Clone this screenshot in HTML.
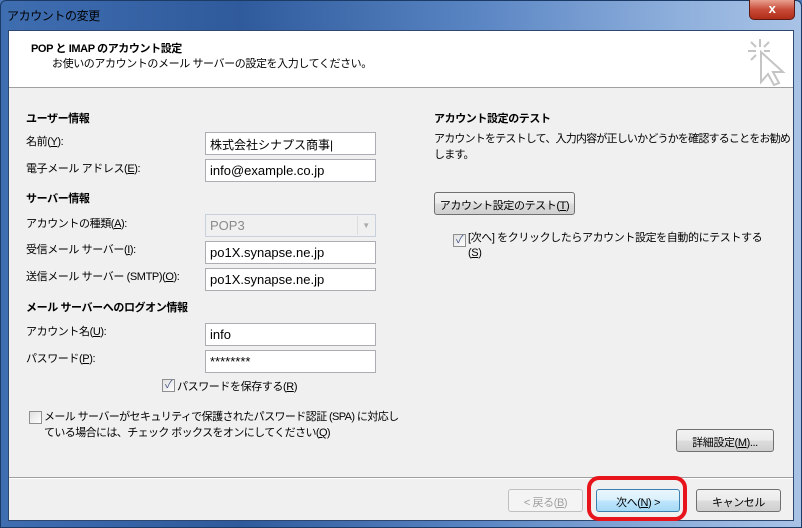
<!DOCTYPE html>
<html><head><meta charset="utf-8"><style>
*{margin:0;padding:0;box-sizing:border-box}
body{width:802px;height:528px;overflow:hidden;background:#4a78b8;font-family:"Liberation Sans","Noto Sans CJK JP",sans-serif;font-size:11px;letter-spacing:-0.4px;color:#000;position:relative}
.a{position:absolute;white-space:nowrap}
.frame{position:absolute;left:0;top:0;width:802px;height:528px;background:linear-gradient(90deg,#3f6eb0 0%,#2f5a9c 30%,#5b86c4 60%,#8fb0dc 85%,#a9c3e6 100%);border:1px solid #1c3a66;border-radius:6px 6px 0 0}
.client{position:absolute;left:8px;top:30px;width:786px;height:491px;background:#f0f0f0;border:1px solid #2d4770}
.hdr{position:absolute;left:0;top:0;width:784px;height:57px;background:#fff;border-bottom:1px solid #a0a0a0}
.in{position:absolute;height:23px;background:#fff;border:1px solid #abadb3;padding:3px 0 0 4px;font-size:13px;letter-spacing:0;white-space:nowrap}
.b{font-weight:bold}
.btn{position:absolute;height:23px;border:1px solid #707070;border-radius:3px;background:linear-gradient(#f2f2f2,#ebebeb 50%,#dddddd 51%,#cfcfcf);text-align:center;padding-top:4px;white-space:nowrap}
.cb{position:absolute;width:13px;height:13px;border:1px solid #8e8f8f;background:linear-gradient(135deg,#e0e0e0,#fff)}
u{text-decoration:underline}
</style></head><body>
<div class="frame"></div>
<div class="a" style="left:7px;top:7px;font-size:12px">アカウントの変更</div>
<div class="a" style="left:749px;top:0;width:46px;height:20px;border:1px solid #5a1a12;border-top:none;border-radius:0 0 5px 5px;background:linear-gradient(#e8a090,#c84c38 50%,#b02c18);color:#fff;text-align:center;font-weight:bold;font-size:13px;line-height:18px">x</div>
<div class="client">
<div class="hdr">
<div class="a b" style="left:22px;top:9px">POP と IMAP のアカウント設定</div>
<div class="a" style="left:43px;top:24px">お使いのアカウントのメール サーバーの設定を入力してください。</div>
<svg class="a" style="left:737px;top:6px" width="40" height="50" viewBox="0 0 40 50"><g stroke="#c4c4c4" stroke-width="2" fill="none"><path d="M14 2v8M2 14h8M5 5l5 5M23 5l-5 5M5 23l5-5M18 14h6"/><path d="M15 15l0 30 7-8 6 11 5-2-6-11 10 0z" fill="#fff"/></g></svg>
</div>
<div class="a b" style="left:17px;top:79px">ユーザー情報</div>
<div class="a" style="left:17px;top:102px">名前(<u>Y</u>):</div>
<div class="in" style="left:196px;top:101px;width:171px;font-size:12px">株式会社シナプス商事|</div>
<div class="a" style="left:17px;top:129px">電子メール アドレス(<u>E</u>):</div>
<div class="in" style="left:196px;top:128px;width:171px">info@example.co.jp</div>
<div class="a b" style="left:17px;top:159px">サーバー情報</div>
<div class="a" style="left:17px;top:184px">アカウントの種類(<u>A</u>):</div>
<div class="in" style="left:196px;top:183px;width:171px;background:#f0f0f0;border-color:#c8d0dc;color:#8a8a8a">POP3</div>
<div class="a" style="left:348px;top:185px;width:17px;height:19px;border-left:1px solid #ddd;color:#aaa;font-size:8px;text-align:center;padding-top:5px">▼</div>
<div class="a" style="left:17px;top:210px">受信メール サーバー(<u>I</u>):</div>
<div class="in" style="left:196px;top:210px;width:171px">po1X.synapse.ne.jp</div>
<div class="a" style="left:17px;top:237px">送信メール サーバー (SMTP)(<u>O</u>):</div>
<div class="in" style="left:196px;top:237px;width:171px">po1X.synapse.ne.jp</div>
<div class="a b" style="left:17px;top:268px">メール サーバーへのログオン情報</div>
<div class="a" style="left:17px;top:292px">アカウント名(<u>U</u>):</div>
<div class="in" style="left:196px;top:292px;width:171px">info</div>
<div class="a" style="left:17px;top:319px">パスワード(<u>P</u>):</div>
<div class="in" style="left:196px;top:319px;width:171px">********</div>
<div class="cb" style="left:153px;top:348px;color:#4a5a8a;font-size:11px;line-height:11px;text-align:center">✓</div>
<div class="a" style="left:168px;top:347px">パスワードを保存する(<u>R</u>)</div>
<div class="cb" style="left:20px;top:380px"></div>
<div class="a" style="left:35px;top:378px;line-height:16px;letter-spacing:-0.6px">メール サーバーがセキュリティで保護されたパスワード認証 (SPA) に対応し<br>ている場合には、チェック ボックスをオンにしてください(<u>Q</u>)</div>
<div class="a b" style="left:425px;top:79px">アカウント設定のテスト</div>
<div class="a" style="left:425px;top:100px;line-height:16px;letter-spacing:-0.8px">アカウントをテストして、入力内容が正しいかどうかを確認することをお勧め<br>します。</div>
<div class="btn" style="left:425px;top:161px;width:141px">アカウント設定のテスト(<u>T</u>)</div>
<div class="cb" style="left:444px;top:203px;color:#4a5a8a;font-size:11px;line-height:11px;text-align:center">✓</div>
<div class="a" style="left:459px;top:200px;line-height:15px">[次へ] をクリックしたらアカウント設定を自動的にテストする<br>(<u>S</u>)</div>
<div class="btn" style="left:667px;top:398px;width:98px">詳細設定(<u>M</u>)...</div>
<div class="a" style="left:0;top:446px;width:784px;height:2px;border-top:1px solid #a0a0a0;border-bottom:1px solid #fff"></div>
<div class="btn" style="left:499px;top:458px;width:75px;border-color:#c0c0c0;background:#f4f4f4;color:#a0a0a0">&lt; 戻る(<u>B</u>)</div>
<div class="btn" style="left:587px;top:458px;width:84px;border-color:#3c7fb1;background:linear-gradient(#eaf6fd,#d9f0fc 50%,#bee6fd 51%,#a7d9f5)">次へ(<u>N</u>) &gt;</div>
<div class="btn" style="left:687px;top:458px;width:85px">キャンセル</div>
</div>
<div class="a" style="left:587px;top:476px;width:100px;height:45px;border:4px solid #e8141c;border-radius:12px"></div>
</body></html>
